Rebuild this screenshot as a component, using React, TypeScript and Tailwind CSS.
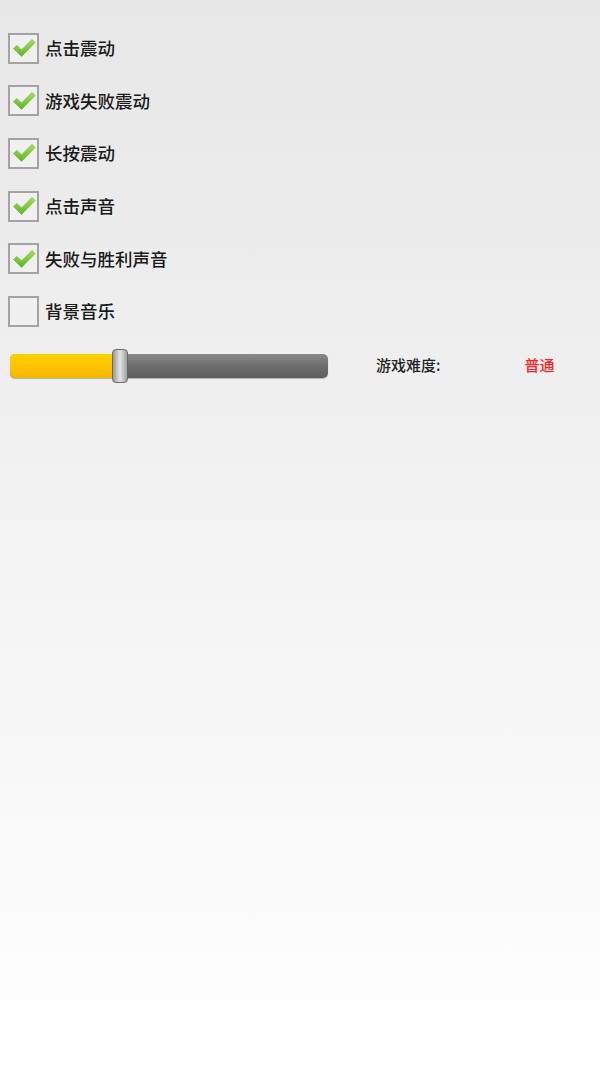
import React, { useState } from 'react';

const FONT = '"Noto Sans CJK SC", "Noto Sans", sans-serif';

const CheckIcon: React.FC = () => (
  <svg width="24" height="22" viewBox="0 0 24 22" className="block">
    <defs>
      <linearGradient id="chk" x1="0" y1="0" x2="0" y2="1">
        <stop offset="0" stopColor="#a6e05a" />
        <stop offset="1" stopColor="#5cb526" />
      </linearGradient>
    </defs>
    <path
      d="M1.5 11.5 L5 8.5 L9.5 13 L20 2.5 L23 5.5 L9.5 19.5 Z"
      fill="url(#chk)"
      stroke="#6fbf3a"
      strokeWidth="0.8"
      strokeLinejoin="round"
    />
  </svg>
);

interface OptionProps {
  label: string;
  checked: boolean;
  onToggle: () => void;
}

const Option: React.FC<OptionProps> = ({ label, checked, onToggle }) => (
  <div className="flex h-[52.6px] items-center cursor-pointer" onClick={onToggle}>
    <div className="ml-2 flex h-[31px] w-[31px] items-center justify-center border-2 border-[#a3a3a3] bg-[#f0f0f0]">
      {checked && <CheckIcon />}
    </div>
    <span className="ml-[6px] text-[17.5px] font-medium text-[#1a1a1a]" style={{ fontFamily: FONT }}>
      {label}
    </span>
  </div>
);

export default function App() {
  const [opts, setOpts] = useState([
    { label: '点击震动', checked: true },
    { label: '游戏失败震动', checked: true },
    { label: '长按震动', checked: true },
    { label: '点击声音', checked: true },
    { label: '失败与胜利声音', checked: true },
    { label: '背景音乐', checked: false },
  ]);

  const toggle = (i: number) =>
    setOpts(prev => prev.map((o, j) => (j === i ? { ...o, checked: !o.checked } : o)));

  return (
    <div className="min-h-[1067px] w-full bg-gradient-to-b from-[#e7e7e7] to-[#ffffff]" style={{ fontFamily: FONT }}>
      <div className="pt-[22px]">
        {opts.map((o, i) => (
          <Option key={o.label} label={o.label} checked={o.checked} onToggle={() => toggle(i)} />
        ))}
      </div>

      {/* difficulty slider */}
      <div className="mt-[10px] flex h-[36px] items-center">
        <div className="relative ml-[10px] h-[24px] w-[318px] rounded-[5px] bg-gradient-to-b from-[#8a8a8a] via-[#6d6d6d] to-[#5e5e5e] shadow-[0_1px_1px_rgba(0,0,0,0.25)]">
          <div className="h-full w-[108px] rounded-l-[5px] bg-gradient-to-b from-[#ffd000] via-[#ffc400] to-[#f5b800]" />
          <div className="absolute left-[102px] top-[-5px] h-[34px] w-[16px] rounded-[4px] border border-[#6a6a6a] bg-gradient-to-r from-[#9a9a9a] via-[#e4e4e4] to-[#a0a0a0]" />
        </div>
        <span className="ml-[48px] text-[15px] font-medium text-[#222]">游戏难度:</span>
        <span className="ml-[84px] text-[15px] font-medium text-[#ff2020]">普通</span>
      </div>
    </div>
  );
}
